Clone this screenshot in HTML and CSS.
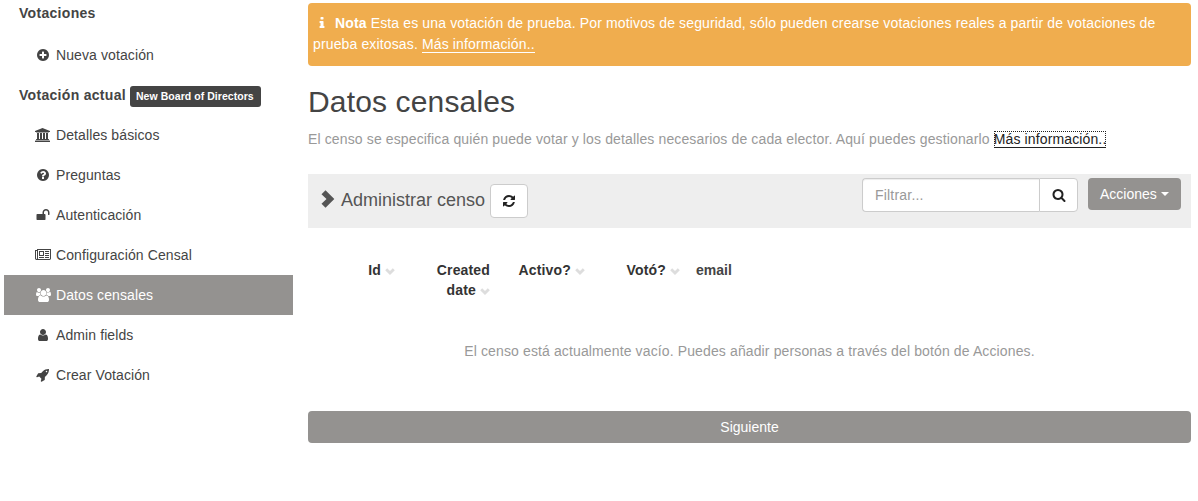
FILE: index.html
```html
<!DOCTYPE html>
<html lang="es">
<head>
<meta charset="utf-8">
<title>Datos censales</title>
<link rel="stylesheet" href="styles.css">
</head>
<body>
<svg class="defs" width="0" height="0">
  <symbol id="plus" viewBox="0 0 1792 1792"><path d="M1344 960v-128q0-26-19-45t-45-19h-256v-256q0-26-19-45t-45-19h-128q-26 0-45 19t-19 45v256h-256q-26 0-45 19t-19 45v128q0 26 19 45t45 19h256v256q0 26 19 45t45 19h128q26 0 45-19t19-45v-256h256q26 0 45-19t19-45zm320-64q0 209-103 385.500t-279.500 279.500-385.500 103-385.500-103-279.500-279.500-103-385.500 103-385.500 279.500-279.500 385.500-103 385.500 103 279.500 279.500 103 385.500z"/></symbol>
  <symbol id="question" viewBox="0 0 1792 1792"><path d="M1024 1376v-192q0-14-9-23t-23-9h-192q-14 0-23 9t-9 23v192q0 14 9 23t23 9h192q14 0 23-9t9-23zm256-672q0-88-55.500-163t-138.500-116-170-41q-243 0-371 213-15 24 8 42l132 100q7 6 19 6 16 0 25-12 53-68 86-92 34-24 86-24 48 0 85.500 26t37.500 59q0 38-20 61t-68 45q-63 28-115.500 86.500t-52.500 125.500v36q0 14 9 23t23 9h192q14 0 23-9t9-23q0-19 21.500-49.500t54.500-49.500q32-18 49-28.500t46-35 44.500-48 28-60.500 12.500-81zm384 192q0 209-103 385.500t-279.500 279.500-385.500 103-385.500-103-279.500-279.500-103-385.500 103-385.500 279.500-279.500 385.500-103 385.500 103 279.500 279.500 103 385.500z"/></symbol>
  <symbol id="bank" viewBox="0 0 1920 1792"><path d="M960 0l960 384v128h-128q0 26-20.500 45t-48.500 19h-1526q-28 0-48.500-19t-20.500-45h-128v-128zm-704 640h256v768h128v-768h256v768h128v-768h256v768h128v-768h256v768h59q28 0 48.500 19t20.500 45v64h-1664v-64q0-26 20.500-45t48.500-19h59v-768zM1851 1600q28 0 48.500 19t20.500 45v128h-1920v-128q0-26 20.500-45t48.500-19h1782z"/></symbol>
  <symbol id="unlock" viewBox="0 0 1792 1792"><path d="M1728 576v256q0 26-19 45t-45 19h-64q-26 0-45-19t-19-45v-256q0-106-75-181t-181-75-181 75-75 181v192h96q40 0 68 28t28 68v576q0 40-28 68t-68 28h-960q-40 0-68-28t-28-68v-576q0-40 28-68t68-28h672v-192q0-185 131.500-316.500t316.500-131.500 316.500 131.500 131.500 316.500z"/></symbol>
  <symbol id="news" viewBox="0 0 2048 1792"><path d="M1024 512h-384v384h384v-384zm128 640v128h-640v-128h640zm0-768v640h-640v-640h640zm640 768v128h-512v-128h512zm0-256v128h-512v-128h512zm0-256v128h-512v-128h512zm0-256v128h-512v-128h512zm-1536 960v-960h-128v960q0 26 19 45t45 19 45-19 19-45zm1664 0v-1088h-1536v1088q0 33-11 64h1483q26 0 45-19t19-45zm128-1216v1216q0 80-56 136t-136 56h-1664q-80 0-136-56t-56-136v-1088h256v-128h1792z"/></symbol>
  <symbol id="users" viewBox="0 0 1920 1792"><path d="M593 896q-162 5-265 128h-134q-82 0-138-40.500t-56-118.500q0-353 124-353 6 0 43.500 21t97.500 42.500 119 21.500q67 0 133-23-5 37-5 66 0 159 81 287zm1071 637q0 120-73 189.500t-194 69.500h-874q-121 0-194-69.500t-73-189.500q0-53 3.500-103.500t14-109 26.500-108.500 43-97.500 62-81 85.500-53.500 111.500-20q10 0 43 21.500t73 48 107 48 135 21.500 135-21.500 107-48 73-48 43-21.500q61 0 111.500 20t85.500 53.500 62 81 43 97.500 26.500 108.500 14 109 3.500 103.500zm-1024-1277q0 106-75 181t-181 75-181-75-75-181 75-181 181-75 181 75 75 181zm704 384q0 159-112.500 271.500t-271.500 112.500-271.500-112.500-112.500-271.500 112.500-271.500 271.500-112.500 271.500 112.500 112.500 271.500zm576 225q0 78-56 118.500t-138 40.500h-134q-103-123-265-128 81-128 81-287 0-29-5-66 66 23 133 23 59 0 119-21.500t97.500-42.500 43.500-21q124 0 124 353zm-128-609q0 106-75 181t-181 75-181-75-75-181 75-181 181-75 181 75 75 181z"/></symbol>
  <symbol id="user" viewBox="0 0 1792 1792"><path d="M1536 1399q0 109-62.500 187t-150.500 78h-854q-88 0-150.500-78t-62.500-187q0-85 8.500-160.500t31.500-152 58.500-131 94-89 134.500-34.500q131 128 313 128t313-128q76 0 134.500 34.500t94 89 58.500 131 31.500 152 8.500 160.500zm-256-887q0 159-112.500 271.500t-271.500 112.500-271.500-112.500-112.500-271.500 112.500-271.500 271.500-112.500 271.500 112.500 112.500 271.500z"/></symbol>
  <symbol id="rocket" viewBox="0 0 1792 1792"><path d="M1440 448q0-40-28-68t-68-28-68 28-28 68 28 68 68 28 68-28 28-68zm224-288q0 249-75.500 430.500t-253.500 360.500q-81 80-195 176l-20 379q-2 16-16 26l-384 224q-7 4-16 4-12 0-23-9l-64-64q-13-14-8-32l85-276-281-281-276 85q-3 1-9 1-14 0-23-9l-64-64q-17-19-5-39l224-384q10-14 26-16l379-20q96-114 176-195 188-187 358-258t431-71q14 0 24 9.500t10 22.500z"/></symbol>
  <symbol id="info" viewBox="0 0 1792 1792"><path d="M1216 1344v128q0 26-19 45t-45 19h-512q-26 0-45-19t-19-45v-128q0-26 19-45t45-19h64v-384h-64q-26 0-45-19t-19-45v-128q0-26 19-45t45-19h384q26 0 45 19t19 45v576h64q26 0 45 19t19 45zm-128-1152v192q0 26-19 45t-45 19h-256q-26 0-45-19t-19-45v-192q0-26 19-45t45-19h256q26 0 45 19t19 45z"/></symbol>
  <symbol id="refresh" viewBox="0 0 1792 1792"><path d="M1639 1056q0 5-1 7-64 268-268 434.500t-478 166.500q-146 0-282.500-55t-243.500-157l-129 129q-19 19-45 19t-45-19-19-45v-448q0-26 19-45t45-19h448q26 0 45 19t19 45-19 45l-137 137q71 66 161 102t187 36q134 0 250-65t186-179q11-17 53-117 8-23 30-23h192q13 0 22.500 9.500t9.500 22.500zm25-800v448q0 26-19 45t-45 19h-448q-26 0-45-19t-19-45 19-45l138-138q-148-137-349-137-134 0-250 65t-186 179q-11 17-53 117-8 23-30 23h-199q-13 0-22.500-9.500t-9.500-22.500v-7q65-268 270-434.500t480-166.500q146 0 284 55.500t245 156.500l130-129q19-19 45-19t45 19 19 45z"/></symbol>
  <symbol id="search" viewBox="0 0 1792 1792"><path d="M1216 832q0-185-131.500-316.500t-316.500-131.500-316.500 131.500-131.500 316.500 131.500 316.500 316.500 131.500 316.500-131.500 131.500-316.500zm512 832q0 52-38 90t-90 38q-54 0-90-38l-343-342q-179 124-399 124-143 0-273.500-55.500t-225-150-150-225-55.500-273.500 55.500-273.500 150-225 225-150 273.500-55.500 273.500 55.500 225 150 150 225 55.500 273.500q0 220-124 399l343 343q37 37 37 90z"/></symbol>
  <symbol id="right" viewBox="0 0 14 18"><path d="M4.500 0.200L0.500 4.200l5 4.800-5 4.800 4 4 8.800-8.800z"/></symbol>
  <symbol id="down" viewBox="0 0 10 7"><path d="M2.200 .2L.2 2.200 5 7 9.800 2.200 7.800 .2 5 3z"/></symbol>
</svg>
<div class="layout">
  <nav class="side">
    <div class="head first">Votaciones</div>
    <a class="item"><svg class="ico"><use href="#plus"/></svg>Nueva votación</a>
    <div class="head">Votación actual <span class="label">New Board of Directors</span></div>
    <a class="item"><svg class="ico wide"><use href="#bank"/></svg>Detalles básicos</a>
    <a class="item"><svg class="ico"><use href="#question"/></svg>Preguntas</a>
    <a class="item"><svg class="ico"><use href="#unlock"/></svg>Autenticación</a>
    <a class="item"><svg class="ico news"><use href="#news"/></svg>Configuración Censal</a>
    <a class="item active"><svg class="ico group"><use href="#users"/></svg>Datos censales</a>
    <a class="item"><svg class="ico"><use href="#user"/></svg>Admin fields</a>
    <a class="item"><svg class="ico"><use href="#rocket"/></svg>Crear Votación</a>
  </nav>
  <main class="main">
    <div class="alert"><svg class="info"><use href="#info"/></svg><b>Nota</b> Esta es una votación de prueba. Por motivos de seguridad, sólo pueden crearse votaciones reales a partir de votaciones de<br>prueba exitosas. <a class="more">Más información..</a></div>
    <h1 class="title">Datos censales</h1>
    <p class="lead">El censo se especifica quién puede votar y los detalles necesarios de cada elector. Aquí puedes gestionarlo <a class="more focus">Más información..</a></p>
    <div class="bar">
      <svg class="arrow"><use href="#right"/></svg>
      <span class="bartitle">Administrar censo</span>
      <button class="btn refresh"><svg class="bi"><use href="#refresh"/></svg></button>
      <div class="filter"><input class="input" placeholder="Filtrar..."><button class="btn go"><svg class="bi"><use href="#search"/></svg></button></div>
      <button class="actions">Acciones<i class="caret"></i></button>
    </div>
    <div class="cols">
      <div class="th id">Id <svg class="sort"><use href="#down"/></svg></div>
      <div class="th created">Created<br>date <svg class="sort"><use href="#down"/></svg></div>
      <div class="th activo">Activo? <svg class="sort"><use href="#down"/></svg></div>
      <div class="th voto">Votó? <svg class="sort"><use href="#down"/></svg></div>
      <div class="th email">email</div>
    </div>
    <p class="empty">El censo está actualmente vacío. Puedes añadir personas a través del botón de Acciones.</p>
    <button class="next">Siguiente</button>
  </main>
</div>
</body>
</html>
```
FILE: styles.css
```css
* { box-sizing: border-box; }
body { margin: 0; background: #fff; color: #444; font: 14px/20px "Liberation Sans", Arial, sans-serif; }
button, input { font: inherit; }
svg { fill: currentColor; flex: none; }
.defs { display: block; height: 0; }
.layout { display: flex; padding: 0 7px 0 4px; }
.side { width: 289px; margin-right: 15px; letter-spacing: .1px; }
.head { height: 40px; padding: 10px 15px; font-weight: bold; letter-spacing: .3px; white-space: nowrap; display: flex; align-items: center; gap: 4px; }
.head.first { height: 35px; padding: 3px 15px 12px; }
.label { background: #444; color: #fff; font-size: 10.5px; line-height: 15px; letter-spacing: .05px; padding: 3px 7px 3px 6px; border-radius: 3px; position: relative; top: 1px; }
.item { display: flex; align-items: center; height: 40px; padding-left: 32px; }
.item.active { background: #949290; color: #fff; }
.ico { width: 14px; height: 14px; margin: 0 6px 0 0; }
.ico.wide { width: 15px; margin: 0 6px 0 -1px; }
.ico.group { width: 15px; margin: 0 5px 0 0; }
.ico.news { width: 16px; margin: 0 5px 0 -1px; }
.main { flex: 1; min-width: 0; padding-top: 3px; }
.alert { height: 63px; background: #f0ad4e; color: #fff; border-radius: 4px; padding: 10px 5px; line-height: 21px; letter-spacing: .137px; white-space: nowrap; }
.info { width: 14px; height: 14px; margin: 0 6px 0 2px; vertical-align: -2px; }
.more { border-bottom: 1px solid currentColor; }
.title { margin: 18px 0 0; font-size: 30px; line-height: 36px; font-weight: normal; letter-spacing: .15px; }
.lead { margin: 9px 0 0; color: #999; white-space: nowrap; letter-spacing: .13px; }
.focus { color: #222; outline: 1px dotted #222; outline-offset: -1px; }
.bar { display: flex; align-items: flex-start; height: 54px; margin-top: 25px; padding: 4px 10px 0 13px; background: #eee; color: #555; }
.arrow { width: 14px; height: 18px; margin: 12px 6px 0 0; }
.bartitle { font-size: 18px; line-height: 20px; margin: 12px 5px 0 0; }
.btn { display: flex; align-items: center; justify-content: center; padding: 0; border: 1px solid #ccc; background: #fff; color: #222; height: 34px; width: 38px; }
.refresh { margin-top: 6px; border-radius: 4px; }
.bi { width: 14px; height: 14px; }
.filter { display: flex; margin-left: auto; }
.input { width: 177px; height: 34px; padding: 6px 12px; border: 1px solid #ccc; border-right: 0; border-radius: 4px 0 0 4px; box-shadow: inset 0 1px 1px rgba(0,0,0,.075); letter-spacing: .2px; }
.input::placeholder { color: #999; }
.go { width: 39px; border-radius: 0 4px 4px 0; }
.actions { display: flex; align-items: center; width: 93px; height: 32px; margin-left: 10px; padding: 0 12px; border: 0; border-radius: 4px; background: #949290; color: #fff; }
.caret { margin-left: 4px; border: 4px solid transparent; border-top-color: #fff; border-bottom: 0; }
.cols { display: grid; grid-template-columns: 87px 95px 95px 95px 100px; margin-top: 32px; height: 40px; font-weight: bold; color: #333; }
.th { text-align: right; white-space: nowrap; letter-spacing: .15px; }
.th.email { text-align: left; padding-left: 16px; color: #444; letter-spacing: 0; }
.sort { width: 10px; height: 7px; fill: #ddd; vertical-align: 0; }
.empty { margin: 41px 0 0; text-align: center; color: #999; letter-spacing: .125px; }
.next { display: block; width: 100%; height: 32px; margin-top: 50px; border: 0; border-radius: 4px; background: #949290; color: #fff; }
```
